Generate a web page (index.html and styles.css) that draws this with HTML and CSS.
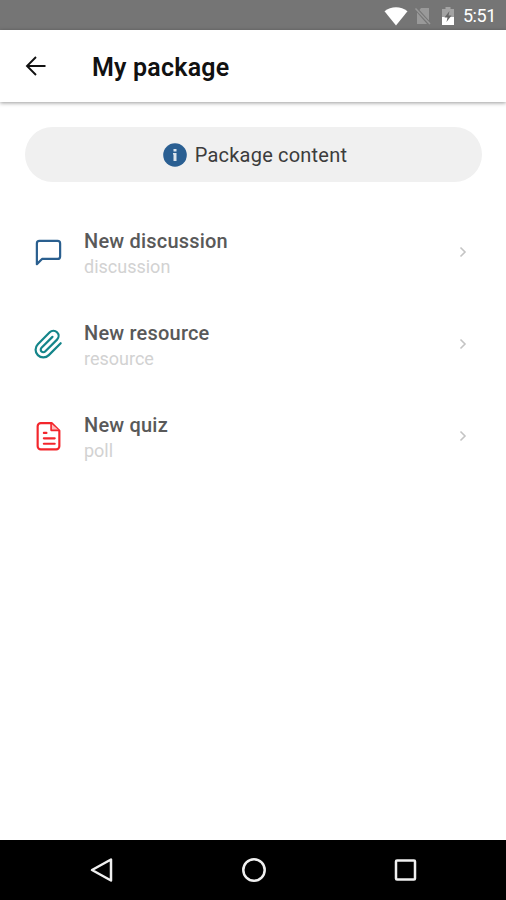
FILE: index.html
```html
<!DOCTYPE html>
<html lang="en">
<head>
    <meta charset="UTF-8">
    <meta name="viewport" content="width=device-width, initial-scale=1.0">
    <title>My package</title>
    <link rel="stylesheet" href="styles.css">
</head>
<body>
    <div class="status-bar">
        <svg class="wifi" width="24" height="19" viewBox="0 0 24 19">
            <path d="M12 18.500 0.500 4.200C7-1 17-1 23.500 4.200z" fill="#fff"/>
        </svg>
        <svg class="no-sim" width="18" height="20" viewBox="0 0 18 20">
            <path d="M7 2h8v12.500L5.500 4zM3 6.500 13 18H3z" fill="#999"/>
            <path d="M1.500 2.500 16 18" stroke="#999" stroke-width="1.600"/>
        </svg>
        <svg class="battery" width="12" height="18" viewBox="0 0 12 18">
            <path d="M0 2h3.500V0h5v2H12v8H0z" fill="#a3a3a3"/>
            <path d="M0 10h12v8H0z" fill="#fff"/>
            <path d="M7.500 4 2.500 10.500h3L4.500 15l5-6.500h-3z" fill="#666"/>
        </svg>
        <span class="clock">5:51</span>
    </div>
    <header class="header">
        <svg class="back" width="22" height="22" viewBox="0 0 22 22" fill="none" stroke="#111" stroke-width="1.900">
            <path d="M20.500 11H2M11 2 2 11l9 9"/>
        </svg>
        <h1>My package</h1>
    </header>
    <main class="content">
        <div class="banner">
            <svg width="24" height="24" viewBox="0 0 24 24">
                <circle cx="12" cy="12" r="11.800" fill="#2a5f92"/>
                <path d="M10.500 6h3v2.500h-3zM10 10h3.500v8h-3v-6.500H10z" fill="#dce5ed"/>
            </svg>
            <span>Package content</span>
        </div>
        <ul class="list">
            <li class="item">
                <svg class="icon discussion" viewBox="0 0 24 24">
                    <path d="M21 15a2 2 0 0 1-2 2H7l-4 4V5a2 2 0 0 1 2-2h14a2 2 0 0 1 2 2z"/>
                </svg>
                <div class="text">
                    <div class="name">New discussion</div>
                    <div class="type">discussion</div>
                </div>
                <svg class="chevron" viewBox="0 0 8 12"><path d="M1.500 1.500 6 6l-4.500 4.500"/></svg>
            </li>
            <li class="item">
                <svg class="icon resource" viewBox="0 0 24 24">
                    <path d="M21.440 11.050l-9.190 9.190a6 6 0 0 1-8.490-8.490l9.190-9.190a4 4 0 0 1 5.660 5.660l-9.200 9.190a2 2 0 0 1-2.830-2.830l8.490-8.480"/>
                </svg>
                <div class="text">
                    <div class="name">New resource</div>
                    <div class="type">resource</div>
                </div>
                <svg class="chevron" viewBox="0 0 8 12"><path d="M1.500 1.500 6 6l-4.500 4.500"/></svg>
            </li>
            <li class="item">
                <svg class="icon quiz" viewBox="0 0 30 30">
                    <path d="M18 2H7.500a3 3 0 0 0-3 3v19.500a3 3 0 0 0 3 3h15a3 3 0 0 0 3-3V9.500z"/>
                    <path class="fold" d="M17.500 2.500V9h7.500"/>
                    <path d="M10.500 11.500h2.500M10.500 16.800h10.500M10.500 22h10.500"/>
                </svg>
                <div class="text">
                    <div class="name">New quiz</div>
                    <div class="type">poll</div>
                </div>
                <svg class="chevron" viewBox="0 0 8 12"><path d="M1.500 1.500 6 6l-4.500 4.500"/></svg>
            </li>
        </ul>
    </main>
    <nav class="nav-bar">
        <svg width="26" height="26" viewBox="0 0 26 26"><path d="M22 2.500v21L3 13z"/></svg>
        <svg width="26" height="26" viewBox="0 0 26 26"><circle cx="13" cy="13" r="10.700"/></svg>
        <svg width="26" height="26" viewBox="0 0 26 26"><rect x="3" y="3.500" width="19" height="19" rx="1"/></svg>
    </nav>
</body>
</html>
```
FILE: styles.css
```css
* {
    box-sizing: border-box;
}
body {
    margin: 0;
    height: 900px;
    display: flex;
    flex-direction: column;
    background-color: #fff;
    font-family: Roboto, sans-serif;
    overflow: hidden;
}
.status-bar {
    height: 30px;
    flex: none;
    display: flex;
    align-items: center;
    justify-content: flex-end;
    padding: 2px 10px 0 0;
    background-color: #757575;
    color: #fff;
}
.wifi {
    margin-right: 6px;
}
.no-sim {
    margin-right: 10px;
}
.battery {
    margin-right: 9px;
}
.clock {
    font-size: 18px;
    line-height: 28px;
    letter-spacing: -0.4px;
}
.header {
    height: 72px;
    flex: none;
    display: flex;
    align-items: center;
    padding-left: 25px;
    box-shadow: 0 1px 4px rgba(0, 0, 0, 0.4);
}
.back {
    margin-right: 45px;
}
h1 {
    margin: 4px 0 0;
    font-size: 25px;
    font-weight: 600;
    line-height: 30px;
    letter-spacing: 0.2px;
    color: #111;
}
.content {
    flex: 1;
    padding: 25px 25px 0;
}
.banner {
    height: 55px;
    display: flex;
    align-items: center;
    justify-content: center;
    gap: 8px;
    width: 457px;
    border-radius: 28px;
    padding-left: 3px;
    background-color: #f0f0f0;
    font-size: 20px;
    letter-spacing: 0.2px;
    color: #3c3c3c;
}
.list {
    list-style: none;
    margin: 24px 0 0;
    padding: 0;
}
.item {
    height: 92px;
    display: flex;
    align-items: center;
    padding: 0 14px 0 8px;
}
.icon {
    width: 31px;
    height: 31px;
    margin-right: 20px;
    fill: none;
    stroke-width: 1.7;
    stroke-linecap: round;
    stroke-linejoin: round;
}
.discussion {
    stroke: #2a5f8f;
}
.resource {
    stroke: #14858a;
}
.quiz {
    stroke: #f3262c;
    stroke-width: 2.1;
}
.quiz .fold {
    stroke-width: 1.6;
    fill: #fbb;
}
.text {
    flex: 1;
    padding-top: 4px;
}
.name {
    font-size: 20px;
    font-weight: 500;
    line-height: 25px;
    letter-spacing: 0.2px;
    color: #595959;
}
.type {
    font-size: 18px;
    line-height: 25px;
    color: #d2d2d2;
}
.chevron {
    width: 8px;
    height: 12px;
    fill: none;
    stroke: #c4c4c4;
    stroke-width: 1.6;
}
.nav-bar {
    height: 60px;
    flex: none;
    display: flex;
    align-items: center;
    justify-content: space-around;
    padding: 0 24px 0 26px;
    background-color: #000;
}
.nav-bar svg {
    fill: none;
    stroke: #f0f0f0;
    stroke-width: 2.5;
    stroke-linejoin: round;
}
```
